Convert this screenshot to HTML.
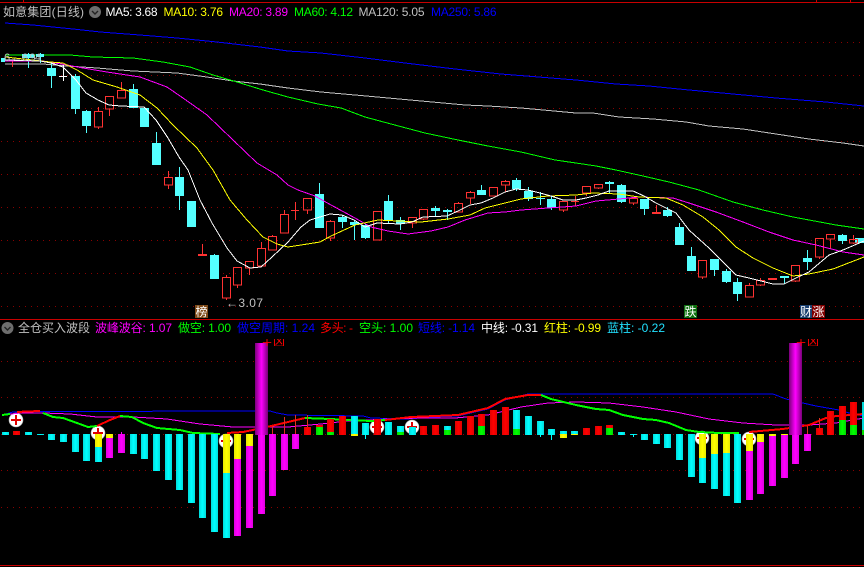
<!DOCTYPE html>
<html><head><meta charset="utf-8"><style>
html,body{margin:0;padding:0;background:#000;width:864px;height:567px;overflow:hidden}
svg{display:block}
text{font-family:"Liberation Sans","WenQuanYi Zen Hei","Noto Sans CJK SC",sans-serif;font-size:12px}
.l{fill:none;stroke-width:1;shape-rendering:crispEdges}
.t{fill:none;stroke-width:2;shape-rendering:crispEdges}
.g{stroke:#8a0000;stroke-width:1;stroke-dasharray:1 5;shape-rendering:crispEdges}
rect{shape-rendering:crispEdges}
</style></head><body>
<svg width="864" height="567" viewBox="0 0 864 567" xmlns="http://www.w3.org/2000/svg">
<defs>
<linearGradient id="c"><stop offset="0" stop-color="#00dcdc"/><stop offset=".5" stop-color="#00ffff"/><stop offset="1" stop-color="#00dcdc"/></linearGradient>
<linearGradient id="m"><stop offset="0" stop-color="#e000e0"/><stop offset=".5" stop-color="#ff00ff"/><stop offset="1" stop-color="#e000e0"/></linearGradient>
<linearGradient id="r"><stop offset="0" stop-color="#e00000"/><stop offset=".5" stop-color="#ff0000"/><stop offset="1" stop-color="#e00000"/></linearGradient>
<linearGradient id="y"><stop offset="0" stop-color="#e8e800"/><stop offset=".5" stop-color="#ffff00"/><stop offset="1" stop-color="#e8e800"/></linearGradient>
<linearGradient id="v"><stop offset="0" stop-color="#7a007a"/><stop offset=".5" stop-color="#ff00ff"/><stop offset="1" stop-color="#7a007a"/></linearGradient>
<linearGradient id="n"><stop offset="0" stop-color="#00d800"/><stop offset=".5" stop-color="#00ff00"/><stop offset="1" stop-color="#00d800"/></linearGradient>
<clipPath id="k"><rect x="255" y="339" width="610" height="7"/></clipPath>
</defs>
<rect width="864" height="567" fill="#000"/>
<rect x="0" y="2" width="864" height="1" fill="#c80000"/>
<rect x="23" y="0" width="1" height="2" fill="#c80000"/>
<rect x="816" y="0" width="1" height="2" fill="#c80000"/>
<rect x="850" y="0" width="1" height="2" fill="#c80000"/>
<rect x="0" y="319" width="864" height="1" fill="#c80000"/>
<rect x="0" y="565" width="864" height="1" fill="#c80000"/>
<path class="g" d="M1 42.5H864M1 75.5H864M1 108.5H864M1 141.5H864M1 174.5H864M1 207.5H864M1 240.5H864M1 273.5H864M1 306.5H864M1 361.5H864M1 397.5H864M1 434.5H864M1 470.5H864M1 507.5H864"/>

<!-- header -->
<text x="3" y="16" fill="#c0c0c0" textLength="81">如意集团(日线)</text>
<circle cx="95" cy="12" r="6" fill="#6e6e6e"/><path d="M92 11l3 3 3-3" fill="none" stroke="#222" stroke-width="1.4"/>
<text x="105.500" y="16" fill="#ffffff" textLength="52">MA5: 3.68</text>
<text x="163.500" y="16" fill="#ffff00" textLength="59.500">MA10: 3.76</text>
<text x="229" y="16" fill="#ff00ff" textLength="59">MA20: 3.89</text>
<text x="294" y="16" fill="#00ff00" textLength="59">MA60: 4.12</text>
<text x="358.500" y="16" fill="#c0c0c0" textLength="66">MA120: 5.05</text>
<text x="431" y="16" fill="#0000ff" textLength="65.500">MA250: 5.86</text>

<!-- moving averages -->
<polyline class="l" stroke="#0000ff" points="5,23 33,25 73,29 100,32 140,35 177,38 217,42 260,47 288,51 321,53 365,58 405,63 455,69 501,74 576,80 616,84 649,86 689,90 733,94 776,98 826,102 864,106"/>
<polyline class="l" stroke="#c0c0c0" points="5,64 43,64 67,66 97,68 133,71 177,73 207,77 233,81 260,84 288,88 321,92 355,95 388,98 421,101 465,105 488,106 521,108 576,113 593,113 619,117 653,119 686,122 709,126 743,129 776,134 809,139 843,143 864,146"/>
<polyline class="l" stroke="#00ff00" points="5,55 70,55 93,57 133,58 163,62 190,67 213,75 237,82 263,90 288,97 318,104 341,108 365,117 391,124 425,133 458,140 488,146 521,152 555,160 576,163 596,166 616,170 643,176 669,182 699,190 733,202 763,210 793,217 836,225 864,229"/>

<!-- candles -->
<path fill="#54ffff" shape-rendering="crispEdges" d="M1 58h4v4h-4zM22 54h12v4h-12zM36 54h8v3h-8zM47 68h9v8h-9zM71 76h9v33h-9zM82 111h9v15h-9zM129 89h9v19h-9zM140 108h9v19h-9zM152 143h9v22h-9zM175 177h9v19h-9zM187 201h9v26h-9zM210 255h9v24h-9zM315 194h9v34h-9zM338 217h9v5h-9zM350 222h9v3h-9zM361 225h9v13h-9zM384 201h9v19h-9zM396 220h9v4h-9zM431 208h9v3h-9zM443 210h9v2h-9zM477 190h9v5h-9zM512 180h9v9h-9zM524 191h9v8h-9zM536 198h9v1h-9zM547 199h9v9h-9zM605 182h9v2h-9zM617 185h9v17h-9zM640 199h9v10h-9zM663 210h9v6h-9zM675 227h9v18h-9zM687 256h9v15h-9zM710 259h9v11h-9zM722 271h9v11h-9zM733 282h9v12h-9zM780 276h9v2h-9zM803 258h9v4h-9zM838 235h9v6h-9zM855 238h9v5h-9z"/>
<path stroke="#54ffff" fill="none" shape-rendering="crispEdges" d="M28.500 53V68M40.500 53V63M51.500 63V88M75.500 74V114M86.500 110V133M133.500 84V89M156.500 132V143M179.500 167V210M214.500 254V256M319.500 183V194M342.500 215V228M354.500 220V240M365.500 224V239M388.500 195V223M400.500 217V230M435.500 206V216M447.500 209V220M481.500 185V190M516.500 178V191M528.500 187V201M540.500 192V205M551.500 196V210M609.500 181V193M621.500 184V203M644.500 199V215M667.500 207V217M679.500 223V228M691.500 247V256M714.500 259V276M726.500 269V283M737.500 278V301M784.500 276V284M807.500 250V270M842.500 234V244"/>
<path stroke="#ff3232" fill="none" shape-rendering="crispEdges" d="M94.500 111.500h8V127h-8zM105.500 96.500h8V109h-8zM117.500 90.500h8V98h-8zM164.500 177.500h8V185h-8zM222.500 277.500h8V298h-8zM233.500 267.500h8V285h-8zM245.500 261.500h8V268h-8zM257.500 248.500h8V266h-8zM268.500 236.500h8V250h-8zM280.500 214.500h8V233h-8zM303.500 198.500h8V210h-8zM326.500 221.500h8V238h-8zM373.500 211.500h8V240h-8zM408.500 217.500h8V223h-8zM419.500 209.500h8V219h-8zM454.500 203.500h8V212h-8zM466.500 192.500h8V198h-8zM489.500 187.500h8V196h-8zM501.500 181.500h8V185h-8zM559.500 201.500h8V210h-8zM582.500 186.500h8V193h-8zM594.500 184.500h8V188h-8zM629.500 198.500h8V203h-8zM698.500 260.500h8V277h-8zM745.500 285.500h8V297h-8zM756.500 280.500h8V285h-8zM791.500 265.500h8V281h-8zM815.500 238.500h8V257h-8zM826.500 234.500h8V239h-8zM849.500 239.500h8V243h-8z
M12.500 60V67M98.500 107V111M98.500 127V129M109.500 109V116M121.500 82V90M168.500 171V177M168.500 185V189M226.500 275V277M226.500 298V300M237.500 285V288M249.500 268V275M261.500 242V248M272.500 235V236M284.500 210V214M295.500 202V220M307.500 210V214M330.500 220V221M330.500 238V241M412.500 223V228M423.500 219V220M458.500 202V203M470.500 191V192M470.500 198V204M505.500 180V181M505.500 185V192M563.500 210V212M575.500 196V206M586.500 193V196M598.500 188V189M633.500 203V205M702.500 277V279M749.500 283V285M760.500 278V280M760.500 285V286M795.500 281V282M819.500 257V259M830.500 239V249M853.500 235V239M853.500 243V244M202.500 244V255M656.500 205V213"/>
<path fill="#ff3232" shape-rendering="crispEdges" d="M198 254h9v2h-9zM291 210h8v1h-8zM571 201h8v1h-8zM652 212h9v2h-9zM768 278h9v2h-9z"/>
<path stroke="#fff" fill="none" shape-rendering="crispEdges" d="M63.500 65V81M59 76.500H67"/>

<polyline class="l" stroke="#ff00ff" points="5,61 43,61 67,65 83,68 107,72 140,77 167,87 183,98 207,115 233,140 257,163 277,175 288,185 298,190 315,196 331,205 355,218 371,227 388,231 408,234 431,231 448,227 465,220 488,213 505,212 521,210 548,208 576,206 596,201 619,199 639,197 673,198 689,203 716,212 743,222 769,232 793,240 816,245 843,252 864,255"/>
<polyline class="l" stroke="#ffff00" points="5,57 50,62 63,63 77,70 93,80 117,87 140,95 157,108 173,125 197,148 213,170 230,200 247,220 263,237 277,244 288,247 301,245 320,242 331,236 355,225 378,220 398,221 421,222 448,219 470,215 485,208 505,203 521,199 548,196 576,195 593,193 619,194 639,197 666,198 683,205 703,217 719,230 736,247 753,258 773,268 793,276 809,274 833,269 864,257"/>
<polyline class="l" stroke="#ffffff" points="5,60 40,61 51,63 63,67 76,80 86,93 98,100 109,105 121,106 144,107 156,120 168,138 179,157 188,170 200,200 212,223 227,248 237,261 250,268 261,267 272,257 288,242 301,227 310,220 330,214 342,215 354,220 365,227 377,223 400,224 412,222 423,217 447,216 458,211 470,205 481,203 493,198 505,192 516,189 528,190 540,193 551,196 563,200 576,200 586,198 598,195 609,191 633,191 644,196 656,203 676,213 689,230 709,248 723,262 736,275 749,278 773,284 784,284 798,277 809,272 829,255 843,250 864,241"/>
<text x="4" y="61" fill="#c0c0c0" style="font-size:11px" textLength="37">6 ←6.94</text>

<text x="226" y="307" fill="#c0c0c0" textLength="37">←3.07</text>
<rect x="195" y="305" width="13" height="13" fill="#7f4a18"/><text x="195.500" y="316" fill="#fff">榜</text>
<rect x="684" y="305" width="13" height="13" fill="#0f7010"/><text x="684.500" y="316" fill="#fff">跌</text>
<rect x="800" y="305" width="12" height="13" fill="#1a4070"/><text x="800" y="316" fill="#fff">财</text>
<rect x="812" y="305" width="13" height="13" fill="#800000"/><text x="812.500" y="316" fill="#fff">涨</text>

<!-- sub panel header -->
<circle cx="7.500" cy="328" r="6" fill="#6e6e6e"/><path d="M4.500 327l3 3 3-3" fill="none" stroke="#222" stroke-width="1.4"/>
<text x="18" y="332" fill="#c0c0c0" textLength="72">全仓买入波段</text>
<text x="95" y="332" fill="#ff00ff" textLength="77">波峰波谷: 1.07</text>
<text x="178" y="332" fill="#00ff00" textLength="53">做空: 1.00</text>
<text x="237" y="332" fill="#0000ff" textLength="78">做空周期: 1.24</text>
<text x="320" y="332" fill="#ff0000" textLength="33">多头: -</text>
<text x="359" y="332" fill="#00ff00" textLength="54">空头: 1.00</text>
<text x="418" y="332" fill="#0000ff" textLength="57">短线: -1.14</text>
<text x="481" y="332" fill="#ffffff" textLength="57">中线: -0.31</text>
<text x="544" y="332" fill="#ffff00" textLength="57">红柱: -0.99</text>
<text x="607" y="332" fill="#22e0ff" textLength="58">蓝柱: -0.22</text>

<!-- circles -->
<g>
<circle cx="16" cy="420" r="7" fill="#fff" stroke="#aaa" stroke-width=".6"/><path d="M11 420H21M16 415V425" stroke="#e00000" stroke-width="2"/>
<circle cx="98" cy="433" r="7" fill="#fff" stroke="#aaa" stroke-width=".6"/><path d="M93 433H103M98 428V438" stroke="#e00000" stroke-width="2"/>
<circle cx="226" cy="441" r="7" fill="#fff" stroke="#aaa" stroke-width=".6"/><path d="M221 441H231" stroke="#e00000" stroke-width="2"/>
<circle cx="377" cy="427" r="7" fill="#fff" stroke="#aaa" stroke-width=".6"/><path d="M372 427H382" stroke="#e00000" stroke-width="2"/>
<circle cx="412" cy="427" r="7" fill="#fff" stroke="#aaa" stroke-width=".6"/><path d="M407 427H417M412 422V432" stroke="#e00000" stroke-width="2"/>
<circle cx="702" cy="438" r="7" fill="#fff" stroke="#aaa" stroke-width=".6"/><path d="M697 438H707" stroke="#e00000" stroke-width="2"/>
<circle cx="749" cy="439" r="7" fill="#fff" stroke="#aaa" stroke-width=".6"/><path d="M744 439H754" stroke="#e00000" stroke-width="2"/>
</g>

<!-- sub lines -->
<polyline class="l" stroke="#0000ff" points="2,415 13,412 40,411.500 270,411 277,413 288,415 363,416 371,418 406,419 435,417 458,416 488,409 505,400 528,394 541,394 576,394 773,394 786,399 803,403 816,406 839,410 849,413 864,416"/>
<polyline class="l" stroke="#ff00ff" points="3,415 20,413 43,413 70,414 97,417 133,417 167,419 200,424 233,427 288,427 321,424 348,421 388,419 421,418 455,418 488,415 521,407 548,403 576,402 609,403 643,407 676,412 709,419 743,423 776,425 809,425 836,423 864,418"/>
<polyline class="t" stroke="#00ff00" points="2,415 10,414"/>
<polyline class="t" stroke="#ff0000" points="17,412 27,411.500 40,411"/>
<polyline class="t" stroke="#00ff00" points="43,413 53,417 63,418 77,423 88,427 97,426"/>
<polyline class="t" stroke="#ff0000" points="97,426 110,420 120,416"/>
<polyline class="t" stroke="#00ff00" points="120,416 132,417 143,423 157,428 180,430 193,433 220,434"/>
<polyline class="t" stroke="#ff0000" points="227,433 243,432 267,427 288,422 305,418"/>
<polyline class="t" stroke="#00ff00" points="305,418 330,419 371,421 385,420"/>
<polyline class="t" stroke="#ff0000" points="385,420 411,417 435,416 458,415 488,408 505,399 528,395 541,395"/>
<polyline class="t" stroke="#00ff00" points="541,395 551,399 576,405 596,409 609,410 623,415 643,419 656,420 669,423 686,430 699,432 719,433 739,433"/>
<polyline class="t" stroke="#ff0000" points="749,432 783,429 809,425 826,418 836,416 864,414"/>
<path stroke="#e03020" fill="none" shape-rendering="crispEdges" d="M272.500 426V434M284.500 417V434M295.500 415V434M307.500 415V427M807.500 426V434M819.500 418V428"/>
<path stroke="#00ffff" fill="none" shape-rendering="crispEdges" d="M365.500 434V439M540.500 434V437M551.500 434V440M633.500 434V437M630 434.500H637"/>
<path stroke="#ff00ff" fill="none" shape-rendering="crispEdges" d="M121.500 432V434"/>

<!-- bars -->
<g>
<rect x="2" y="432" width="7" height="3" fill="url(#c)"/>
<rect x="13" y="431" width="7" height="4" fill="url(#r)"/>
<rect x="25" y="432" width="7" height="3" fill="url(#c)"/>
<rect x="37" y="434" width="7" height="1" fill="url(#c)"/>
<rect x="48" y="434" width="7" height="6" fill="url(#c)"/>
<rect x="60" y="434" width="7" height="8" fill="url(#c)"/>
<rect x="72" y="434" width="7" height="18" fill="url(#c)"/>
<rect x="83" y="434" width="7" height="27" fill="url(#c)"/>
<rect x="95" y="434" width="7" height="13" fill="url(#y)"/><rect x="95" y="447" width="7" height="15" fill="url(#c)"/>
<rect x="106" y="434" width="7" height="4" fill="url(#y)"/><rect x="106" y="438" width="7" height="20" fill="url(#m)"/>
<rect x="118" y="434" width="7" height="19" fill="url(#m)"/>
<rect x="130" y="434" width="7" height="20" fill="url(#c)"/>
<rect x="141" y="434" width="7" height="25" fill="url(#c)"/>
<rect x="153" y="434" width="7" height="37" fill="url(#c)"/>
<rect x="165" y="434" width="7" height="46" fill="url(#c)"/>
<rect x="176" y="434" width="7" height="56" fill="url(#c)"/>
<rect x="188" y="434" width="7" height="69" fill="url(#c)"/>
<rect x="199" y="434" width="7" height="84" fill="url(#c)"/>
<rect x="211" y="434" width="7" height="98" fill="url(#c)"/>
<rect x="223" y="434" width="7" height="39" fill="url(#y)"/><rect x="223" y="473" width="7" height="65" fill="url(#c)"/>
<rect x="234" y="434" width="7" height="25" fill="url(#y)"/><rect x="234" y="459" width="7" height="77" fill="url(#m)"/>
<rect x="246" y="434" width="7" height="12" fill="url(#y)"/><rect x="246" y="446" width="7" height="82" fill="url(#m)"/>
<rect x="255" y="343" width="13" height="92" fill="url(#v)"/><rect x="258" y="435" width="7" height="79" fill="url(#m)"/>
<rect x="269" y="434" width="7" height="62" fill="url(#m)"/>
<rect x="281" y="434" width="7" height="36" fill="url(#m)"/>
<rect x="292" y="434" width="7" height="15" fill="url(#m)"/>
<rect x="304" y="427" width="7" height="8" fill="url(#r)"/>
<rect x="316" y="425" width="7" height="2" fill="url(#r)"/><rect x="316" y="427" width="7" height="8" fill="url(#n)"/>
<rect x="327" y="419" width="7" height="13" fill="url(#r)"/><rect x="327" y="432" width="7" height="3" fill="url(#n)"/>
<rect x="339" y="416" width="7" height="19" fill="url(#r)"/>
<rect x="351" y="416" width="7" height="18" fill="url(#c)"/><rect x="351" y="434" width="7" height="2" fill="url(#y)"/>
<rect x="362" y="423" width="7" height="12" fill="url(#c)"/>
<rect x="374" y="419" width="7" height="16" fill="url(#r)"/>
<rect x="385" y="422" width="7" height="13" fill="url(#c)"/>
<rect x="397" y="426" width="7" height="6" fill="url(#c)"/><rect x="397" y="432" width="7" height="3" fill="url(#n)"/>
<rect x="409" y="427" width="7" height="8" fill="url(#c)"/>
<rect x="420" y="426" width="7" height="9" fill="url(#r)"/>
<rect x="432" y="425" width="7" height="10" fill="url(#r)"/>
<rect x="444" y="426" width="7" height="4" fill="url(#c)"/><rect x="444" y="430" width="7" height="5" fill="url(#n)"/>
<rect x="455" y="421" width="7" height="14" fill="url(#r)"/>
<rect x="467" y="416" width="7" height="19" fill="url(#r)"/>
<rect x="478" y="414" width="7" height="12" fill="url(#r)"/><rect x="478" y="426" width="7" height="9" fill="url(#n)"/>
<rect x="490" y="410" width="7" height="25" fill="url(#r)"/>
<rect x="502" y="407" width="7" height="28" fill="url(#r)"/>
<rect x="513" y="410" width="7" height="19" fill="url(#c)"/><rect x="513" y="429" width="7" height="6" fill="url(#n)"/>
<rect x="525" y="416" width="7" height="19" fill="url(#c)"/>
<rect x="537" y="421" width="7" height="14" fill="url(#c)"/>
<rect x="548" y="429" width="7" height="6" fill="url(#c)"/>
<rect x="560" y="431" width="7" height="3" fill="url(#c)"/><rect x="560" y="434" width="7" height="4" fill="url(#y)"/>
<rect x="571" y="431" width="7" height="3" fill="url(#c)"/><rect x="571" y="434" width="7" height="1" fill="url(#y)"/>
<rect x="583" y="428" width="7" height="7" fill="url(#r)"/>
<rect x="595" y="426" width="7" height="9" fill="url(#r)"/>
<rect x="606" y="425" width="7" height="3" fill="url(#r)"/><rect x="606" y="428" width="7" height="7" fill="url(#n)"/>
<rect x="618" y="432" width="7" height="3" fill="url(#c)"/>
<rect x="630" y="434" width="7" height="1" fill="url(#c)"/>
<rect x="641" y="434" width="7" height="6" fill="url(#c)"/>
<rect x="653" y="434" width="7" height="10" fill="url(#c)"/>
<rect x="664" y="434" width="7" height="14" fill="url(#c)"/>
<rect x="676" y="434" width="7" height="26" fill="url(#c)"/>
<rect x="688" y="434" width="7" height="43" fill="url(#c)"/>
<rect x="699" y="434" width="7" height="24" fill="url(#y)"/><rect x="699" y="458" width="7" height="25" fill="url(#c)"/>
<rect x="711" y="434" width="7" height="20" fill="url(#y)"/><rect x="711" y="454" width="7" height="35" fill="url(#c)"/>
<rect x="723" y="434" width="7" height="19" fill="url(#y)"/><rect x="723" y="453" width="7" height="43" fill="url(#c)"/>
<rect x="734" y="434" width="7" height="69" fill="url(#c)"/>
<rect x="746" y="434" width="7" height="17" fill="url(#y)"/><rect x="746" y="451" width="7" height="49" fill="url(#m)"/>
<rect x="757" y="434" width="7" height="8" fill="url(#y)"/><rect x="757" y="442" width="7" height="52" fill="url(#m)"/>
<rect x="769" y="434" width="7" height="2" fill="url(#y)"/><rect x="769" y="436" width="7" height="50" fill="url(#m)"/>
<rect x="781" y="434" width="7" height="1" fill="url(#y)"/><rect x="781" y="435" width="7" height="43" fill="url(#m)"/>
<rect x="789" y="343" width="13" height="92" fill="url(#v)"/><rect x="792" y="435" width="7" height="29" fill="url(#m)"/>
<rect x="804" y="434" width="7" height="17" fill="url(#m)"/>
<rect x="816" y="428" width="7" height="7" fill="url(#r)"/>
<rect x="827" y="411" width="7" height="24" fill="url(#r)"/>
<rect x="839" y="406" width="7" height="14" fill="url(#r)"/><rect x="839" y="420" width="7" height="15" fill="url(#n)"/>
<rect x="850" y="402" width="7" height="23" fill="url(#r)"/><rect x="850" y="425" width="7" height="10" fill="url(#n)"/>
<rect x="862" y="402" width="2" height="28" fill="#00d8d8"/><rect x="862" y="430" width="2" height="5" fill="#00e000"/>
</g>
<g clip-path="url(#k)">
<text x="261" y="346" fill="#ff0000" textLength="24">主凶</text>
<text x="795" y="346" fill="#ff0000" textLength="24">主凶</text>
</g>
</svg>
</body></html>
